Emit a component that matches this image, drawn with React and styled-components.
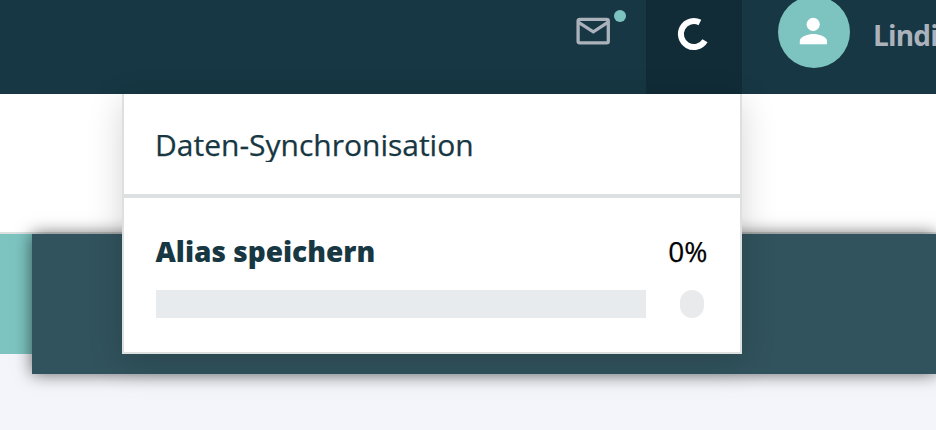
import React from "react";
import styled, { createGlobalStyle } from "styled-components";

const GlobalStyle = createGlobalStyle`
  * { box-sizing: border-box; }
  body {
    margin: 0;
    overflow: hidden;
    background: #f4f5fa;
    font-family: "Open Sans", "Noto Sans", sans-serif;
  }
`;

const Page = styled.div`
  position: relative;
  height: 430px;
  overflow: hidden;
`;

const Header = styled.header`
  display: flex;
  justify-content: flex-end;
  height: 94px;
  background: #163743;
`;

const MailButton = styled.div`
  position: relative;
  width: 104px;
  padding: 17px 0 0 34px;
`;

const Badge = styled.span`
  position: absolute;
  top: 10px;
  left: 72px;
  width: 12px;
  height: 12px;
  border-radius: 50%;
  background: #7dc4c0;
`;

const SyncButton = styled.div`
  width: 96px;
  padding: 16px 0 0 30px;
  background: #112c37;
`;

const User = styled.div`
  display: flex;
  width: 194px;
  padding-left: 36px;
  overflow: hidden;
`;

const Avatar = styled.div`
  flex: none;
  width: 72px;
  height: 72px;
  margin-top: -4px;
  border-radius: 50%;
  background: #7dc4c0;
`;

const UserName = styled.span`
  margin: 16px 0 0 23px;
  color: #abb2bc;
  font-size: 28px;
  font-weight: 700;
  line-height: 38px;
  letter-spacing: -0.8px;
  white-space: nowrap;
`;

const Toolbar = styled.div`
  height: 140px;
  border-bottom: 2px solid #dce0e0;
  background: #fff;
`;

const Stage = styled.div`
  display: flex;
  height: 140px;
`;

const Accent = styled.div`
  width: 32px;
  height: 120px;
  background: #7dc4c0;
`;

const Banner = styled.div`
  flex: 1;
  background: #31535d;
  box-shadow: 0 0 16px rgba(0, 0, 0, 0.6);
`;

const Popup = styled.section`
  position: absolute;
  top: 94px;
  left: 122px;
  width: 620px;
  height: 260px;
  border: 2px solid #dce0e0;
  border-top: 0;
  background: #fff;
  box-shadow: 0 8px 32px rgba(0, 0, 0, 0.17);
`;

const PopupHead = styled.div`
  height: 104px;
  padding: 36px 32px 0 31px;
  border-bottom: 4px solid #dce0e0;
`;

const Title = styled.h2`
  height: 32px;
  margin: 0;
  overflow: hidden;
  color: #173743;
  font-size: 30px;
  font-weight: 400;
  line-height: 30px;
  -webkit-text-stroke: 0.25px currentColor;
`;

const Task = styled.div`
  padding: 34px 32px 0;
`;

const TaskLabel = styled.div`
  display: flex;
  justify-content: space-between;
  margin: 0 0.5px 0 -0.5px;
  font-size: 28px;
  line-height: 38px;
`;

const TaskName = styled.strong`
  color: #173743;
  font-weight: 800;
`;

const Percent = styled.span`
  color: #000;
  -webkit-text-stroke: 0.25px currentColor;
`;

const TaskProgress = styled.div`
  display: flex;
  justify-content: space-between;
  margin-top: 20px;
  padding-right: 4px;
`;

const Track = styled.div`
  width: 490px;
  height: 28px;
  background: #e7ebee;
`;

const Status = styled.div`
  width: 24px;
  height: 28px;
  border-radius: 12px;
  background: #e9eaeb;
`;

const Icon = styled.svg`
  display: block;
`;

export default function App() {
  return (
    <Page>
      <GlobalStyle />
      <Header>
        <MailButton>
          <Icon width="35" height="28" viewBox="0 0 35 28" fill="none" stroke="#abb2bc" strokeWidth="3.3">
            <rect x="2.1" y="2.3" width="30.2" height="23.6" rx="1.6" />
            <path d="M2.6 5.4 17.3 14.8 31.8 5.4" />
          </Icon>
          <Badge />
        </MailButton>
        <SyncButton>
          <Icon width="36" height="36" viewBox="0 0 36 36" fill="none" stroke="#fff" strokeWidth="6">
            <path d="M23.9 6.5A13 13 0 1 0 29 24.8" />
          </Icon>
        </SyncButton>
        <User>
          <Avatar>
            <Icon width="72" height="72" viewBox="0 0 72 72" fill="#fff">
              <circle cx="35.2" cy="28.3" r="6.6" />
              <path d="M21.8 48.3v-3.4c0-4.5 9-6.9 13.6-6.9S49 40.4 49 44.9v3.4z" />
            </Icon>
          </Avatar>
          <UserName>Lindi</UserName>
        </User>
      </Header>
      <Toolbar />
      <Stage>
        <Accent />
        <Banner />
      </Stage>
      <Popup>
        <PopupHead>
          <Title>Daten-Synchronisation</Title>
        </PopupHead>
        <Task>
          <TaskLabel>
            <TaskName>Alias speichern</TaskName>
            <Percent>0%</Percent>
          </TaskLabel>
          <TaskProgress>
            <Track />
            <Status />
          </TaskProgress>
        </Task>
      </Popup>
    </Page>
  );
}
